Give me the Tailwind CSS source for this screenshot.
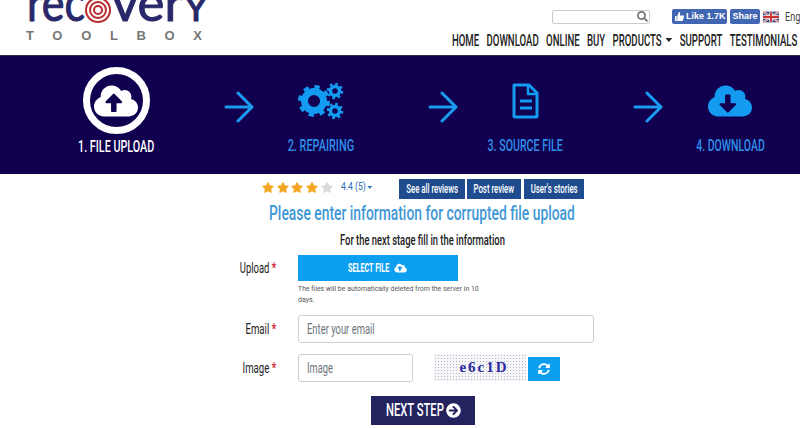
<!DOCTYPE html>
<html><head><meta charset="utf-8"><script src="https://cdn.jsdelivr.net/npm/@tailwindcss/browser@4"></script></head>
<body class="w-[800px] h-[428px] overflow-hidden bg-white font-['Roboto','Liberation_Sans',sans-serif] text-[#222]">
<header class="h-[55px] flex justify-between relative">
  <div class="w-[240px] h-[55px] overflow-hidden">
    <svg width="240" height="55" viewBox="0 0 240 55">
      <g font-family="Lato" fill="#28286a" stroke="#28286a" stroke-width="1">
        <text x="27" y="21" textLength="58" lengthAdjust="spacingAndGlyphs" font-size="50">rec</text>
        <text x="112" y="21" textLength="71" lengthAdjust="spacingAndGlyphs" font-size="50">ver</text>
        <text x="184" y="21" textLength="24" lengthAdjust="spacingAndGlyphs" font-size="36">Y</text>
      </g>
      <circle cx="98" cy="10" r="12" fill="none" stroke="#b92a2e" stroke-width="2"/><circle cx="98" cy="10" r="8" fill="none" stroke="#b92a2e" stroke-width="2"/><circle cx="98" cy="10" r="4" fill="none" stroke="#b92a2e" stroke-width="2"/>
      <text x="26" y="40" font-family="Liberation Sans" font-weight="700" font-size="13" fill="#777" textLength="176">TOOLBOX</text>
    </svg>
  </div>
  <div class="w-[360px] pt-[9px] flex flex-col items-end overflow-hidden">
    <div class="flex items-center h-[15px] w-[360px] pl-[112px] whitespace-nowrap">
      <div class="w-[98px] h-[14px] shrink-0 border border-[#ccc] rounded-[2px] flex items-center justify-end pr-[1px]">
        <svg class="w-[11px] h-[11px]" viewBox="0 0 512 512"><path fill="#777" d="M505 442.7L405.3 343c-4.5-4.5-10.6-7-17-7H372c27.6-35.3 44-79.7 44-128C416 93.1 322.9 0 208 0S0 93.1 0 208s93.1 208 208 208c48.3 0 92.7-16.4 128-44v16.3c0 6.4 2.5 12.5 7 17l99.7 99.7c9.4 9.4 24.6 9.4 33.9 0l28.3-28.3c9.4-9.4 9.4-24.6.1-34zM208 336c-70.7 0-128-57.2-128-128 0-70.7 57.2-128 128-128 70.7 0 128 57.2 128 128 0 70.7-57.2 128-128 128z"/></svg>
      </div>
      <div class="ml-[22px] w-[55px] h-[15px] shrink-0 bg-[#4267b2] rounded-[2px] text-white text-[9px] font-bold font-['Liberation_Sans',sans-serif] flex items-center pl-[3px] gap-[2px]">
        <svg class="w-[9px] h-[9px]" viewBox="0 0 16 16"><path fill="#fff" d="M0 7h3v9H0zM4 7l3-7c2 0 2.500 1.500 2 3l-.5 3H15c1 0 1 1 1 2l-2 7c0 .7-.7 1-1.500 1H4z"/></svg>Like 1.7K
      </div>
      <div class="ml-[3px] w-[30px] h-[15px] shrink-0 bg-[#4267b2] rounded-[2px] text-white text-[9px] font-bold font-['Liberation_Sans',sans-serif] flex items-center justify-center">Share</div>
      <svg class="ml-[3px] w-[16px] h-[12px] shrink-0" viewBox="0 0 60 40"><rect width="60" height="40" fill="#2b3a7c"/><path d="M0 0L60 40M60 0L0 40" stroke="#eee" stroke-width="8"/><path d="M0 0L60 40M60 0L0 40" stroke="#c33" stroke-width="3"/><path d="M30 0V40M0 20H60" stroke="#eee" stroke-width="13"/><path d="M30 0V40M0 20H60" stroke="#c33" stroke-width="7"/></svg>
      <span class="ml-[6px] inline-block origin-left scale-x-[.7] text-[13px] text-[#444]">English</span>
    </div>
    <nav class="mt-[6px] w-max mr-[3px] origin-right scale-x-[.565] flex justify-end gap-[13px] text-[17px] font-medium leading-[20px] whitespace-nowrap text-[#222]">
      <span>HOME</span><span>DOWNLOAD</span><span>ONLINE</span><span>BUY</span><span class="flex items-center gap-[7px]">PRODUCTS<span class="w-0 h-0 border-x-[6px] border-x-transparent border-t-[4px] border-t-[#222]"></span></span><span>SUPPORT</span><span>TESTIMONIALS</span>
    </nav>
  </div>
</header>
<section class="h-[119px] bg-[#10004f] border-t border-[#2a2a50] grid grid-cols-[120px_84.7px_120px_84.7px_120px_84.7px_120px] pl-[56px] relative">
  <div class="flex flex-col items-center pt-[11px]">
    <div class="w-[67px] h-[67px] rounded-full border-[7px] border-white flex items-center justify-center">
      <svg class="w-[44px] h-[36px]" viewBox="0 0 640 512"><path fill="#fff" d="M537.6 226.6c4.1-10.7 6.4-22.4 6.4-34.6 0-53-43-96-96-96-19.7 0-38.1 6-53.3 16.2C367 64.2 315.3 32 256 32c-88.4 0-160 71.6-160 160 0 2.7.1 5.4.2 8.1C40.2 219.8 0 273.2 0 336c0 79.5 64.5 144 144 144h368c70.7 0 128-57.3 128-128 0-61.900-44-113.6-102.4-125.4zM393.4 288H328v112c0 8.800-7.200 16-16 16h-48c-8.800 0-16-7.200-16-16V288h-65.4c-14.300 0-21.400-17.200-11.300-27.300l105.400-105.400c6.200-6.200 16.400-6.200 22.600 0l105.400 105.400c10.100 10.100 2.900 27.300-11.300 27.300z"/></svg>
    </div>
    <div class="mt-[2px] scale-x-[.634] text-[17px] leading-[20px] text-white font-medium whitespace-nowrap">1. FILE UPLOAD</div>
  </div>
  <div class="flex justify-end pr-[7px] pt-[35px]">
    <svg class="w-[30px] h-[32px]" viewBox="0 0 30 32" fill="none" stroke="#1b9cf0" stroke-width="3" stroke-linecap="round" stroke-linejoin="round"><path d="M2 16H28M14 2L28 16L14 30"/></svg>
  </div>
  <div class="flex flex-col items-center pt-[27px]">
    <svg class="w-[46px] h-[36px] shrink-0" viewBox="0 0 46 36" fill="none">
      <circle cx="16" cy="18" r="9.500" stroke="#139bf2" stroke-width="7"/><circle cx="16" cy="18" r="13.500" stroke="#139bf2" stroke-width="5" stroke-dasharray="5 5.600"/>
      <circle cx="37" cy="8" r="4.500" stroke="#139bf2" stroke-width="3.500"/><circle cx="37" cy="8" r="7" stroke="#139bf2" stroke-width="2.500" stroke-dasharray="2.600 2.900"/>
      <circle cx="37" cy="28" r="4.500" stroke="#139bf2" stroke-width="3.500"/><circle cx="37" cy="28" r="7" stroke="#139bf2" stroke-width="2.500" stroke-dasharray="2.600 2.900"/>
    </svg>
    <div class="mt-[16px] scale-x-[.64] text-[17px] font-medium leading-[20px] text-[#2f8fe8] whitespace-nowrap">2. REPAIRING</div>
  </div>
  <div class="flex justify-end pr-[7px] pt-[35px]">
    <svg class="w-[30px] h-[32px]" viewBox="0 0 30 32" fill="none" stroke="#1b9cf0" stroke-width="3" stroke-linecap="round" stroke-linejoin="round"><path d="M2 16H28M14 2L28 16L14 30"/></svg>
  </div>
  <div class="flex flex-col items-center pt-[27px]">
    <svg class="w-[27px] h-[36px] shrink-0" viewBox="0 0 27 36" fill="none" stroke="#139bf2" stroke-width="3" stroke-linejoin="round"><path d="M2 2H17L25 10V33a1 1 0 0 1-1 1H3a1 1 0 0 1-1-1Z"/><path d="M16 2V11H25" stroke-width="2.500"/><path d="M8 18H20M8 25H20"/></svg>
    <div class="mt-[16px] scale-x-[.625] text-[17px] font-medium leading-[20px] text-[#2f8fe8] whitespace-nowrap">3. SOURCE FILE</div>
  </div>
  <div class="flex justify-end pr-[7px] pt-[35px]">
    <svg class="w-[30px] h-[32px]" viewBox="0 0 30 32" fill="none" stroke="#1b9cf0" stroke-width="3" stroke-linecap="round" stroke-linejoin="round"><path d="M2 16H28M14 2L28 16L14 30"/></svg>
  </div>
  <div class="flex flex-col items-center pt-[27px]">
    <svg class="w-[44px] h-[36px] shrink-0" viewBox="0 0 640 512"><path fill="#139bf2" d="M537.6 226.6c4.1-10.7 6.4-22.4 6.4-34.6 0-53-43-96-96-96-19.7 0-38.1 6-53.3 16.2C367 64.2 315.3 32 256 32c-88.4 0-160 71.6-160 160 0 2.7.1 5.4.2 8.1C40.2 219.8 0 273.2 0 336c0 79.5 64.5 144 144 144h368c70.7 0 128-57.3 128-128 0-61.900-44-113.6-102.4-125.4zm-132.900 88.700L299.300 420.700c-6.200 6.200-16.400 6.200-22.600 0L171.300 315.300c-10.100-10.100-2.900-27.300 11.300-27.300H248V176c0-8.800 7.200-16 16-16h48c8.800 0 16 7.200 16 16v112h65.400c14.200 0 21.400 17.200 11.300 27.300z"/></svg>
    <div class="mt-[16px] scale-x-[.617] text-[17px] font-medium leading-[20px] text-[#2f8fe8] whitespace-nowrap">4. DOWNLOAD</div>
  </div>
</section>
<main>
  <div class="h-[26px] flex pl-[262px] pt-[5px]">
    <div class="flex h-[16px] items-center">
      <svg class="w-[12px] h-[11px]" viewBox="0 0 576 512"><path fill="#f5a623" d="M259.300 17.800L194 150.200 47.900 171.500c-26.200 3.800-36.700 36.100-17.700 54.600l105.700 103-25 145.500c-4.500 26.300 23.200 46 46.400 33.700L288 439.600l130.700 68.700c23.200 12.200 50.900-7.400 46.400-33.700l-25-145.500 105.700-103c19-18.500 8.500-50.800-17.700-54.600L382 150.200 316.700 17.800c-11.700-23.600-45.600-23.900-57.400 0z"/></svg>
      <svg class="ml-[2.700px] w-[12px] h-[11px]" viewBox="0 0 576 512"><path fill="#f5a623" d="M259.300 17.800L194 150.200 47.900 171.500c-26.200 3.800-36.700 36.100-17.700 54.600l105.700 103-25 145.500c-4.500 26.300 23.200 46 46.400 33.700L288 439.600l130.700 68.700c23.200 12.200 50.900-7.400 46.400-33.700l-25-145.500 105.700-103c19-18.500 8.500-50.800-17.700-54.600L382 150.200 316.700 17.800c-11.700-23.600-45.600-23.900-57.400 0z"/></svg>
      <svg class="ml-[2.700px] w-[12px] h-[11px]" viewBox="0 0 576 512"><path fill="#f5a623" d="M259.300 17.800L194 150.200 47.900 171.500c-26.200 3.800-36.700 36.100-17.700 54.600l105.700 103-25 145.500c-4.500 26.300 23.200 46 46.400 33.700L288 439.600l130.700 68.700c23.200 12.200 50.900-7.400 46.400-33.700l-25-145.500 105.700-103c19-18.500 8.500-50.800-17.700-54.600L382 150.200 316.700 17.800c-11.700-23.600-45.600-23.900-57.400 0z"/></svg>
      <svg class="ml-[2.700px] w-[12px] h-[11px]" viewBox="0 0 576 512"><path fill="#f5a623" d="M259.300 17.800L194 150.200 47.900 171.500c-26.200 3.800-36.700 36.100-17.700 54.600l105.700 103-25 145.500c-4.500 26.300 23.200 46 46.400 33.700L288 439.600l130.700 68.700c23.200 12.200 50.900-7.400 46.400-33.700l-25-145.500 105.700-103c19-18.500 8.500-50.800-17.700-54.600L382 150.200 316.700 17.800c-11.700-23.600-45.600-23.900-57.400 0z"/></svg>
      <svg class="ml-[2.700px] w-[12px] h-[11px]" viewBox="0 0 576 512"><path fill="#d9d9d9" d="M259.300 17.800L194 150.200 47.900 171.500c-26.200 3.800-36.700 36.100-17.700 54.600l105.700 103-25 145.500c-4.500 26.300 23.200 46 46.400 33.700L288 439.600l130.700 68.700c23.200 12.200 50.900-7.400 46.400-33.700l-25-145.500 105.700-103c19-18.500 8.500-50.800-17.700-54.600L382 150.200 316.700 17.800c-11.700-23.600-45.600-23.900-57.400 0z"/></svg>
    </div>
    <div class="ml-[8px] w-[58px] h-[16px] flex items-center">
      <span class="inline-flex items-center gap-[2px] origin-left scale-x-[.78] text-[11px] leading-[16px] text-[#2a6db5] whitespace-nowrap">4.4 (5)<span class="w-0 h-0 border-x-[3px] border-x-transparent border-t-[3px] border-t-[#2a6db5]"></span></span>
    </div>
    <div class="flex text-white text-[13px] font-medium">
      <span class="w-[66px] h-[20px] bg-[#1f4c8f] flex items-center justify-center overflow-hidden"><span class="scale-x-[.6] whitespace-nowrap">See all reviews</span></span>
      <span class="ml-[2px] w-[54px] h-[20px] bg-[#1f4c8f] flex items-center justify-center overflow-hidden"><span class="scale-x-[.6] whitespace-nowrap">Post review</span></span>
      <span class="ml-[3px] w-[60px] h-[20px] bg-[#1f4c8f] flex items-center justify-center overflow-hidden"><span class="scale-x-[.6] whitespace-nowrap">User's stories</span></span>
    </div>
  </div>
  <h1 class="ml-[269px] w-[310px] origin-left scale-x-[.66] text-[21px] font-medium leading-[26px] text-[#3f97d6] whitespace-nowrap">Please enter information for corrupted file upload</h1>
  <p class="mt-[4px] ml-[340px] w-[166px] origin-left scale-x-[.67] text-[14px] font-medium leading-[20px] text-[#222] whitespace-nowrap">For the next stage fill in the information</p>
  <div class="mt-[5px] grid grid-cols-[276px_1fr] gap-x-[22px]">
    <div class="h-[26px] flex items-center justify-end text-[15px] text-[#222] origin-right scale-x-[.63] whitespace-nowrap">Upload&nbsp;<span class="text-[#d0212f] font-bold">*</span></div>
    <div>
      <div class="w-[160px] h-[26px] bg-[#0c9ff0] text-white text-[13px] font-bold flex items-center pl-[50px] gap-[2px]"><span class="block w-[44px] origin-left scale-x-[.555] whitespace-nowrap">SELECT FILE</span>
        <svg class="w-[13px] h-[10px]" viewBox="0 0 640 512"><path fill="#fff" d="M537.6 226.6c4.1-10.7 6.4-22.4 6.4-34.6 0-53-43-96-96-96-19.7 0-38.1 6-53.3 16.2C367 64.2 315.3 32 256 32c-88.4 0-160 71.6-160 160 0 2.7.1 5.4.2 8.1C40.2 219.8 0 273.2 0 336c0 79.5 64.5 144 144 144h368c70.7 0 128-57.3 128-128 0-61.900-44-113.6-102.4-125.4zM393.4 288H328v112c0 8.800-7.200 16-16 16h-48c-8.800 0-16-7.200-16-16V288h-65.4c-14.300 0-21.400-17.200-11.300-27.300l105.400-105.400c6.200-6.200 16.400-6.200 22.600 0l105.400 105.400c10.100 10.100 2.900 27.300-11.300 27.300z"/></svg>
      </div>
      <p class="mt-[2px] w-[215px] origin-left scale-x-[.867] text-[8px] leading-[11px] text-[#555]">The files will be automatically deleted from the server in 10 days.</p>
    </div>
    <div class="mt-[10px] h-[28px] flex items-center justify-end text-[15px] text-[#222] origin-right scale-x-[.64] whitespace-nowrap">Email&nbsp;<span class="text-[#d0212f] font-bold">*</span></div>
    <div class="mt-[10px] w-[296px] h-[28px] border border-[#ccd0d4] rounded-[3px] px-[8px] flex items-center text-[15px] text-[#6c757d]"><span class="origin-left scale-x-[.628] whitespace-nowrap">Enter your email</span></div>
    <div class="mt-[11px] h-[28px] flex items-center justify-end text-[15px] text-[#222] origin-right scale-x-[.64] whitespace-nowrap">Image&nbsp;<span class="text-[#d0212f] font-bold">*</span></div>
    <div class="mt-[11px] flex items-start">
      <div class="w-[115px] h-[28px] border border-[#ccd0d4] rounded-[3px] px-[8px] flex items-center text-[15px] text-[#6c757d]"><span class="origin-left scale-x-[.62] whitespace-nowrap">Image</span></div>
      <div class="ml-[21px] w-[92px] h-[27px] bg-[radial-gradient(#b8b8c8_0.7px,#f6f6f8_0.7px)] bg-[length:3px_3px] flex items-center justify-center">
        <span class="font-['Liberation_Serif',serif] font-bold text-[15px] tracking-[2px] text-[#2a2aa0] translate-x-[4px]">e6c1D</span>
      </div>
      <div class="ml-[2px] mt-[3px] w-[32px] h-[24px] bg-[#0c9ff0] flex items-center justify-center">
        <svg class="w-[12px] h-[12px]" viewBox="0 0 512 512"><path fill="#fff" d="M370.720 133.280C339.458 104.008 298.888 87.962 255.848 88c-77.458.068-144.328 53.178-162.791 126.850-1.344 5.363-6.122 9.150-11.651 9.150H24.103c-7.498 0-13.194-6.807-11.807-14.176C33.933 94.924 134.813 8 256 8c66.448 0 126.791 26.136 171.315 68.685L463.030 40.970C478.149 25.851 504 36.559 504 57.941V192c0 13.255-10.745 24-24 24H345.941c-21.382 0-32.090-25.851-16.971-40.971l41.750-41.749zM32 296h134.059c21.382 0 32.090 25.851 16.971 40.971l-41.750 41.750c31.262 29.273 71.835 45.319 114.876 45.280 77.418-.07 144.315-53.144 162.787-126.849 1.344-5.363 6.122-9.150 11.651-9.150h57.304c7.498 0 13.194 6.807 11.807 14.176C478.067 417.076 377.187 504 256 504c-66.448 0-126.791-26.136-171.315-68.685L48.970 471.030C33.851 486.149 8 475.441 8 454.059V320c0-13.255 10.745-24 24-24z"/></svg>
      </div>
    </div>
  </div>
  <div class="mt-[14px] ml-[371px] w-[104px] h-[29px] bg-[#23235f] text-white text-[19px] font-medium flex items-center pl-[15px] gap-[4px]"><span class="block w-[56px] origin-left scale-x-[.59] whitespace-nowrap">NEXT STEP</span>
    <svg class="w-[15px] h-[15px]" viewBox="0 0 512 512"><path fill="#fff" d="M256 8c137 0 248 111 248 248S393 504 256 504 8 393 8 256 119 8 256 8zm-28.900 143.600l75.500 72.400H120c-13.300 0-24 10.700-24 24v16c0 13.300 10.700 24 24 24h182.600l-75.500 72.400c-9.700 9.300-9.900 24.800-.4 34.300l11 10.900c9.400 9.400 24.600 9.400 33.900 0L404.300 273c9.400-9.400 9.400-24.600 0-33.900L271.600 106.300c-9.400-9.400-24.600-9.400-33.900 0l-11 10.900c-9.500 9.600-9.300 25.100.4 34.400z"/></svg>
  </div>
</main>
</body></html>
